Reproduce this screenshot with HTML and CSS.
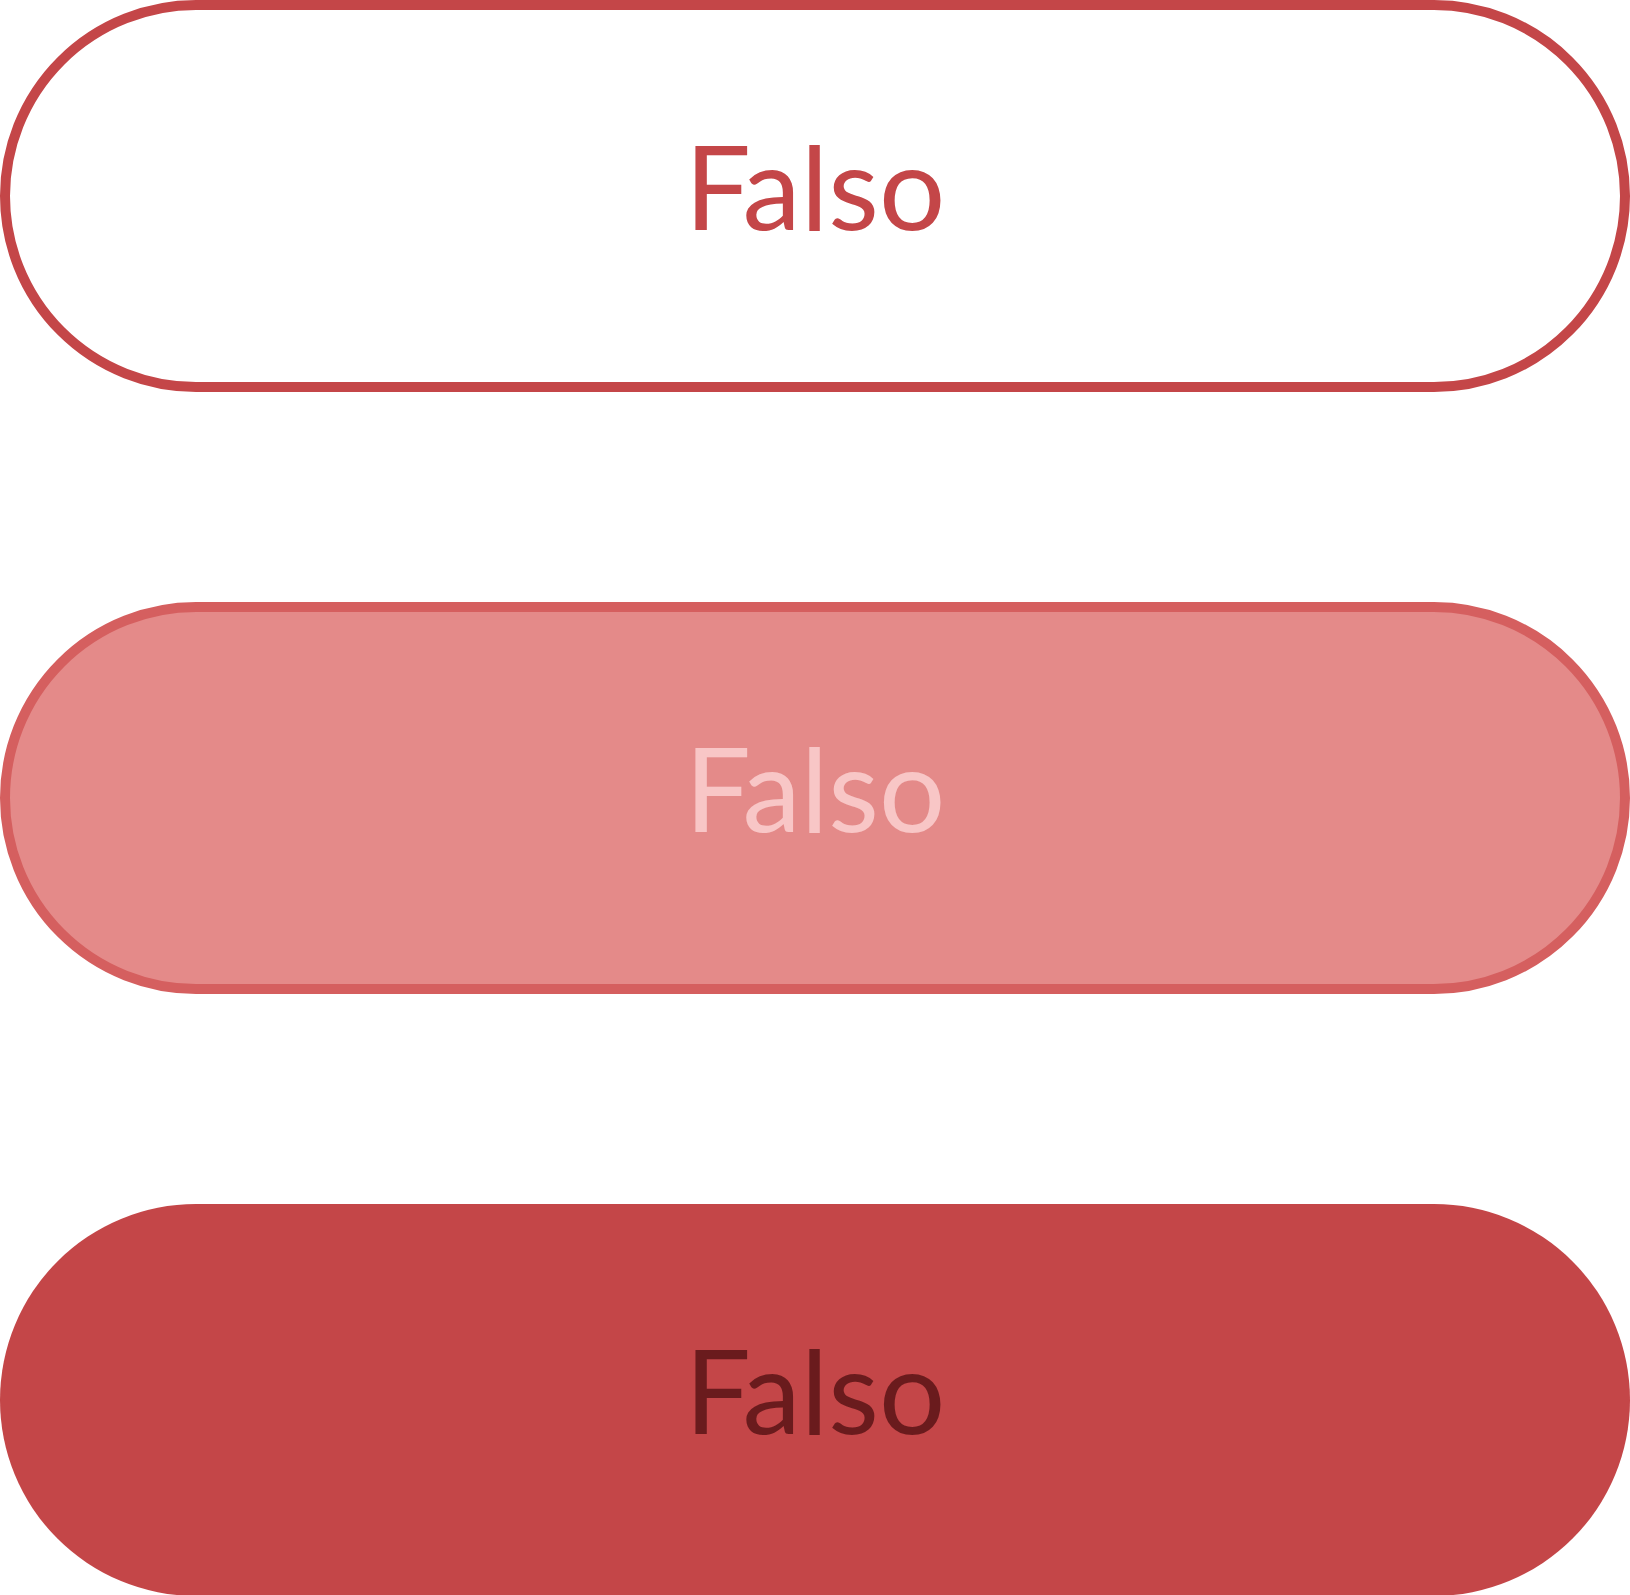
FILE: index.html
```html
<!DOCTYPE html>
<html>
<head>
<meta charset="utf-8">
<link rel="stylesheet" href="styles.css">
</head>
<body>
<div class="stack">
  <button class="btn btn-outline">Falso</button>
  <button class="btn btn-soft">Falso</button>
  <button class="btn btn-solid">Falso</button>
</div>
</body>
</html>
```
FILE: styles.css
```css
html, body {
  margin: 0;
  padding: 0;
  background: #ffffff;
}
.stack {
  display: flex;
  flex-direction: column;
  gap: 210px;
  width: 1630px;
}
.btn {
  box-sizing: border-box;
  display: flex;
  align-items: center;
  justify-content: center;
  width: 1630px;
  height: 392px;
  margin: 0;
  padding: 0 0 22px 0;
  border-radius: 196px;
  font-family: "Lato", "Liberation Sans", sans-serif;
  font-size: 117px;
  font-weight: 400;
  line-height: 1;
  cursor: pointer;
}
.btn-outline {
  background: #ffffff;
  border: 10px solid #c44648;
  color: #c44648;
}
.btn-soft {
  background: #e48a89;
  border: 10px solid #d55f5f;
  color: #f8c6c6;
}
.btn-solid {
  background: #c44648;
  border: none;
  color: #6a1b1d;
}
```
